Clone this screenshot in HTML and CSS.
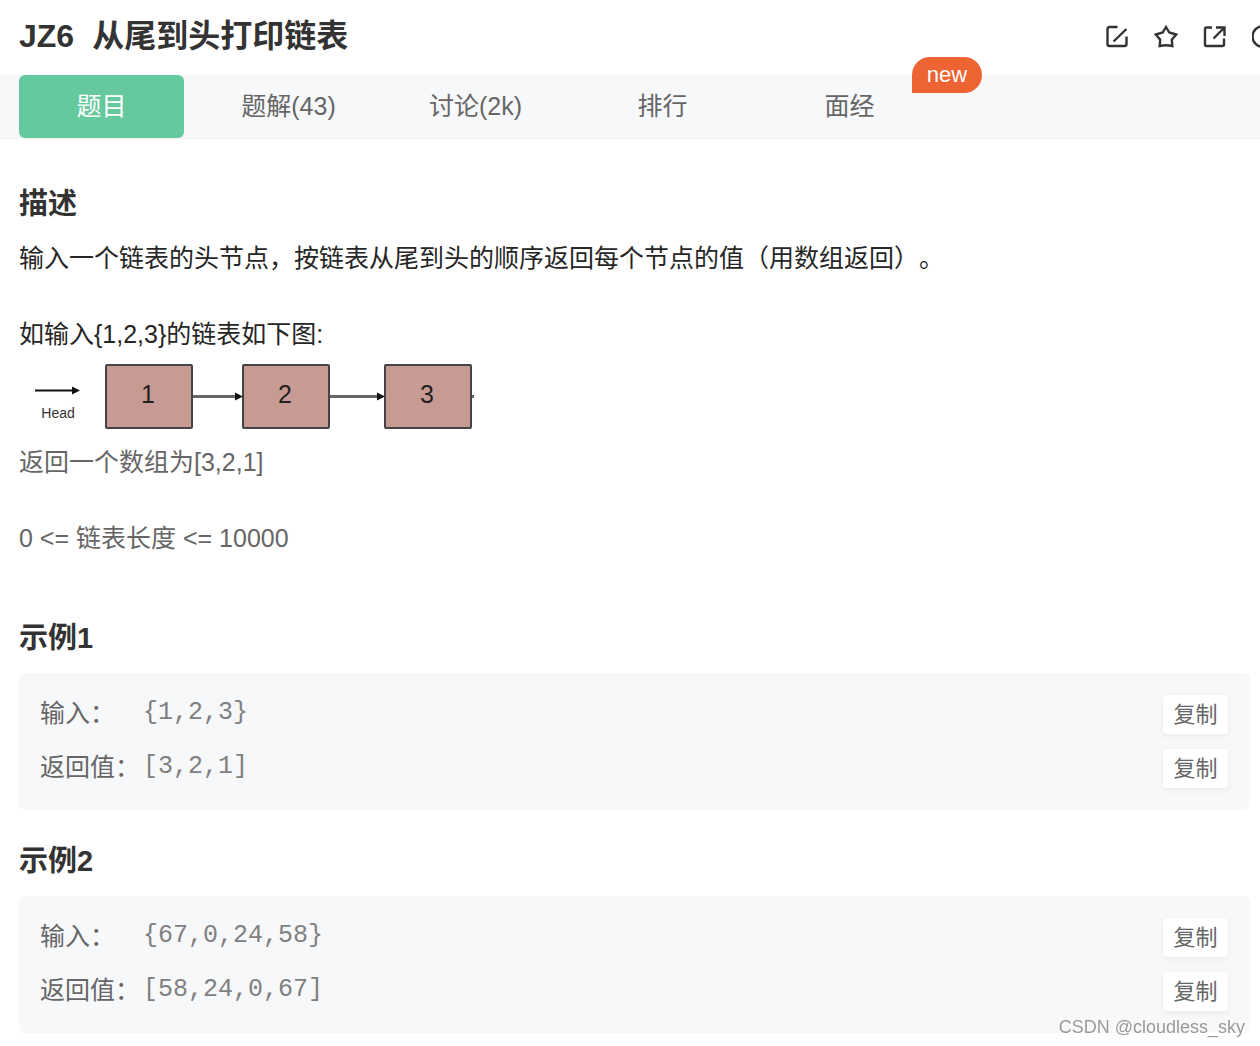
FILE: index.html
```html
<!DOCTYPE html>
<html lang="zh-CN">
<head>
<meta charset="utf-8">
<meta name="viewport" content="width=device-width, initial-scale=1">
<title>JZ6 从尾到头打印链表</title>
<link rel="stylesheet" href="styles.css">
</head>
<body>
<header class="header">
  <h1 class="title"><span>JZ6</span><span>从尾到头打印链表</span></h1>
  <div class="actions">
    <button class="icon-button" type="button" aria-label="编辑">
      <svg viewBox="0 0 24 24"><path d="M12.500 3H4.500a2 2 0 0 0-2 2v15a2 2 0 0 0 2 2h15a2 2 0 0 0 2-2v-7.500M8.500 17.500L21.500 5"/></svg>
    </button>
    <button class="icon-button" type="button" aria-label="收藏">
      <svg viewBox="0 0 24 24"><path d="M12 3l3.300 5.500 6.900 2-4.400 5.200.500 6.300q-6.300-1.600-12.600 0l.500-6.300L1.800 10.500l6.900-2z"/></svg>
    </button>
    <button class="icon-button" type="button" aria-label="分享">
      <svg viewBox="0 0 24 24"><path d="M9 3.500H3.500A1.500 1.500 0 0 0 2 5v15.500A1.500 1.500 0 0 0 3.500 22h16a1.500 1.500 0 0 0 1.500-1.500v-6M13 3.500h8.500V12M10.500 14.500L21 4"/></svg>
    </button>
    <button class="icon-button" type="button" aria-label="帮助">
      <svg viewBox="0 0 24 24"><circle cx="11" cy="12.500" r="10.500"/></svg>
    </button>
  </div>
</header>

<nav class="tabs">
  <a class="tab active" href="#problem">题目</a>
  <a class="tab" href="#solutions">题解(43)</a>
  <a class="tab" href="#discuss">讨论(2k)</a>
  <a class="tab" href="#rank">排行</a>
  <a class="tab" href="#interview">面经<span class="badge">new</span></a>
</nav>

<main class="content" id="problem">
  <section>
    <h2 class="heading">描述</h2>
    <p class="text strong">输入一个链表的头节点，按链表从尾到头的顺序返回每个节点的值（用数组返回）。</p>
    <p class="text strong spaced">如输入{1,2,3}的链表如下图:</p>
    <svg class="diagram" viewBox="1 0 456 90" role="img" aria-label="链表 1、2、3">
      <g class="node">
        <rect x="88" y="12" width="86" height="63" rx="1"/>
        <rect x="225" y="12" width="86" height="63" rx="1"/>
        <rect x="367" y="12" width="86" height="63" rx="1"/>
      </g>
      <path class="link" d="M175 43.500h46M312 43.500h51M454 43.500h2"/>
      <path class="pointer" d="M17 37.500h40"/>
      <path class="arrowhead" d="M54 33.500l8 4-8 4zM217 39.500l8 4-8 4zM359 39.500l8 4-8 4z"/>
      <g class="value">
        <text x="130" y="50">1</text>
        <text x="267" y="50">2</text>
        <text x="409" y="50">3</text>
      </g>
      <text class="caption" x="40" y="65">Head</text>
    </svg>
    <p class="text">返回一个数组为[3,2,1]</p>
    <p class="text spaced">0 &lt;= 链表长度 &lt;= 10000</p>
  </section>

  <section class="example">
    <h2 class="heading">示例1</h2>
    <div class="sample">
      <div class="row"><span class="label">输入：</span><code class="code">{1,2,3}</code><button class="copy" type="button">复制</button></div>
      <div class="row"><span class="label">返回值：</span><code class="code">[3,2,1]</code><button class="copy" type="button">复制</button></div>
    </div>
  </section>

  <section class="example">
    <h2 class="heading">示例2</h2>
    <div class="sample">
      <div class="row"><span class="label">输入：</span><code class="code">{67,0,24,58}</code><button class="copy" type="button">复制</button></div>
      <div class="row"><span class="label">返回值：</span><code class="code">[58,24,0,67]</code><button class="copy" type="button">复制</button></div>
    </div>
  </section>
</main>
<div class="watermark">CSDN @cloudless_sky</div>
</body>
</html>
```
FILE: styles.css
```css
* {
  box-sizing: border-box;
}

body {
  margin: 0;
  background: #fff;
  color: #666;
  font: 25px/38px "Liberation Sans", "Noto Sans CJK SC", sans-serif;
  text-spacing-trim: space-all;
}

h1, h2, p {
  margin: 0;
}

button {
  border: 0;
  font: inherit;
  color: inherit;
  cursor: pointer;
}

.header {
  display: flex;
  justify-content: space-between;
  align-items: center;
  height: 75px;
  padding: 0 0 4px 19px;
  overflow: hidden;
}

.title {
  display: flex;
  gap: 18px;
  font-size: 32px;
  color: #333;
}

/* The last action runs past the panel's edge. */
.actions {
  display: flex;
  flex: none;
  gap: 25px;
  margin-right: -16px;
}

.icon-button {
  width: 24px;
  height: 24px;
  padding: 0;
  background: none;
}

.icon-button svg {
  display: block;
  width: 24px;
  height: 24px;
  fill: none;
  stroke: #333;
  stroke-width: 2.4;
}

.tabs {
  display: flex;
  gap: 22px;
  height: 64px;
  padding-left: 19px;
  background: #f7f8fa;
  border-bottom: 1px solid #f2f3f5;
}

.tab {
  position: relative;
  width: 165px;
  border-radius: 6px;
  line-height: 63px;
  text-align: center;
  text-decoration: none;
  color: #666;
}

.tab.active {
  background: #65c99d;
  color: #fff;
}

.badge {
  position: absolute;
  top: -18px;
  left: 145px;
  width: 70px;
  height: 36px;
  border-radius: 18px 18px 18px 0;
  background: #ed6332;
  color: #fff;
  font-size: 22px;
  line-height: 36px;
}

.content {
  padding: 45px 10px 13px 19px;
}

.heading {
  margin-bottom: 15px;
  font-size: 29px;
  line-height: 40px;
  color: #333;
}

.text.strong {
  color: #262626;
}

.text.spaced {
  margin-top: 38px;
}

.diagram {
  display: block;
  width: 456px;
  height: 90px;
}

.node {
  fill: #c79b94;
  stroke: #444;
  stroke-width: 2;
}

.link {
  stroke: #666;
  stroke-width: 3;
}

.pointer {
  stroke: #111;
  stroke-width: 2;
}

.arrowhead {
  fill: #111;
}

.value {
  fill: #222;
  font-size: 25px;
  text-anchor: middle;
}

.caption {
  fill: #333;
  font-size: 14px;
  text-anchor: middle;
}

.example {
  margin-top: 31px;
}

section:first-child + .example {
  margin-top: 61px;
}

.sample {
  display: flex;
  flex-direction: column;
  gap: 15px;
  padding: 22px 22px 22px 21px;
  border-radius: 6px;
  background: #f7f8fa;
}

.row {
  display: flex;
  align-items: flex-start;
}

.label {
  width: 103px;
  line-height: 36px;
  white-space: nowrap;
}

.code {
  flex: 1;
  color: #808080;
  font-family: "Liberation Mono", monospace;
  font-size: 25px;
  line-height: 36px;
}

.copy {
  width: 65px;
  height: 39px;
  padding: 0;
  border-radius: 4px;
  background: #fff;
  box-shadow: 0 2px 6px rgba(0, 0, 0, 0.06);
  font-size: 22px;
  line-height: 39px;
}

.watermark {
  position: fixed;
  right: 15px;
  bottom: 8px;
  color: #999;
  font-size: 18px;
  line-height: 22px;
  text-shadow: 1px 1px 1px #fff;
}
```
